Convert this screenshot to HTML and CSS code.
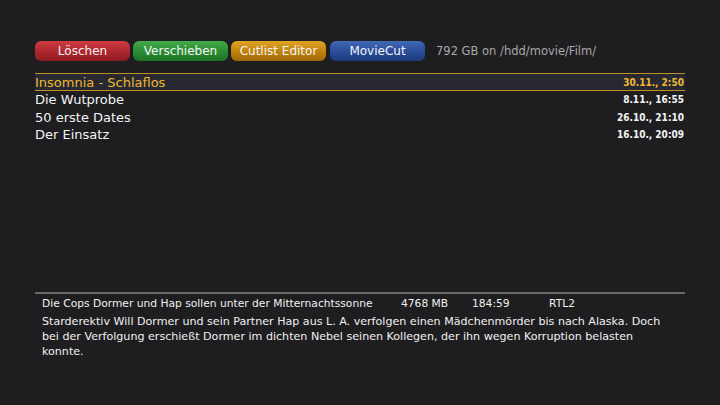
FILE: index.html
```html
<!DOCTYPE html>
<html>
<head>
<meta charset="utf-8">
<link rel="stylesheet" href="styles.css">
</head>
<body>
<div class="screen">
  <div class="topbar">
    <div class="btn red">Löschen</div>
    <div class="btn green">Verschieben</div>
    <div class="btn yellow">Cutlist Editor</div>
    <div class="btn blue">MovieCut</div>
    <div class="space">792 GB on /hdd/movie/Film/</div>
  </div>
  <div class="list">
    <div class="row sel"><span class="title">Insomnia - Schlaflos</span><span class="date">30.11., 2:50</span></div>
    <div class="row"><span class="title">Die Wutprobe</span><span class="date">8.11., 16:55</span></div>
    <div class="row"><span class="title">50 erste Dates</span><span class="date">26.10., 21:10</span></div>
    <div class="row"><span class="title">Der Einsatz</span><span class="date">16.10., 20:09</span></div>
  </div>
  <div class="info">
    <div class="meta">
      <span class="short">Die Cops Dormer und Hap sollen unter der Mitternachtssonne</span>
      <span class="size">4768 MB</span>
      <span class="len">184:59</span>
      <span class="chan">RTL2</span>
    </div>
    <div class="desc">Starderektiv Will Dormer und sein Partner Hap aus L. A. verfolgen einen Mädchenmörder bis nach Alaska. Doch bei der Verfolgung erschießt Dormer im dichten Nebel seinen Kollegen, der ihn wegen Korruption belasten konnte.</div>
  </div>
</div>
</body>
</html>
```
FILE: styles.css
```css
html, body {
  margin: 0;
  padding: 0;
  background: #1e1e20;
}
.screen {
  width: 720px;
  height: 405px;
  background: #1e1e20;
  font-family: "DejaVu Sans", sans-serif;
  color: #f0f0f0;
  display: flex;
  flex-direction: column;
  padding: 41px 35px 0 35px;
  box-sizing: border-box;
}
.topbar {
  display: flex;
  align-items: center;
  height: 20px;
}
.btn {
  width: 95px;
  height: 20px;
  margin-right: 3px;
  border-radius: 6px;
  font-size: 12px;
  line-height: 20px;
  text-align: center;
  color: #f4f4f4;
  box-sizing: border-box;
}
.red { background: linear-gradient(#cf3c42 0%, #b02830 50%, #8e1a20 100%); }
.green { background: linear-gradient(#44aa4a 0%, #2c8e34 50%, #1c7224 100%); }
.yellow { background: linear-gradient(#e0a424 0%, #c2840e 50%, #a06806 100%); margin-right: 4px; }
.blue { background: linear-gradient(#4068b6 0%, #2c4e9a 50%, #1c3a7e 100%); }
.space {
  margin-left: 8px;
  font-size: 11.5px;
  color: #a8a8a8;
}
.list {
  margin-top: 12px;
  height: 219px;
}
.row {
  display: flex;
  justify-content: space-between;
  align-items: center;
  height: 17.5px;
  font-size: 13px;
  color: #f4f4f4;
}
.row.sel {
  height: 18px;
  background: #282832;
  border-top: 1px solid #c09028;
  border-bottom: 1px solid #c09028;
  color: #f0b830;
  box-sizing: border-box;
}
.date {
  font-family: "DejaVu Sans Condensed", "DejaVu Sans", sans-serif;
  font-stretch: condensed;
  font-weight: bold;
  font-size: 10px;
  padding-right: 1px;
}
.info {
  border-top: 2px solid #6a6a6a;
  padding: 3px 0 0 7px;
  width: 650px;
  box-sizing: border-box;
}
.meta {
  display: flex;
  font-size: 10.7px;
  height: 14px;
  line-height: 14px;
  color: #f0f0f0;
}
.short { width: 359px; white-space: nowrap; }
.size { width: 71px; }
.len { width: 77px; }
.desc {
  margin-top: 3px;
  font-size: 11.1px;
  line-height: 15px;
  width: 628px;
}
```
